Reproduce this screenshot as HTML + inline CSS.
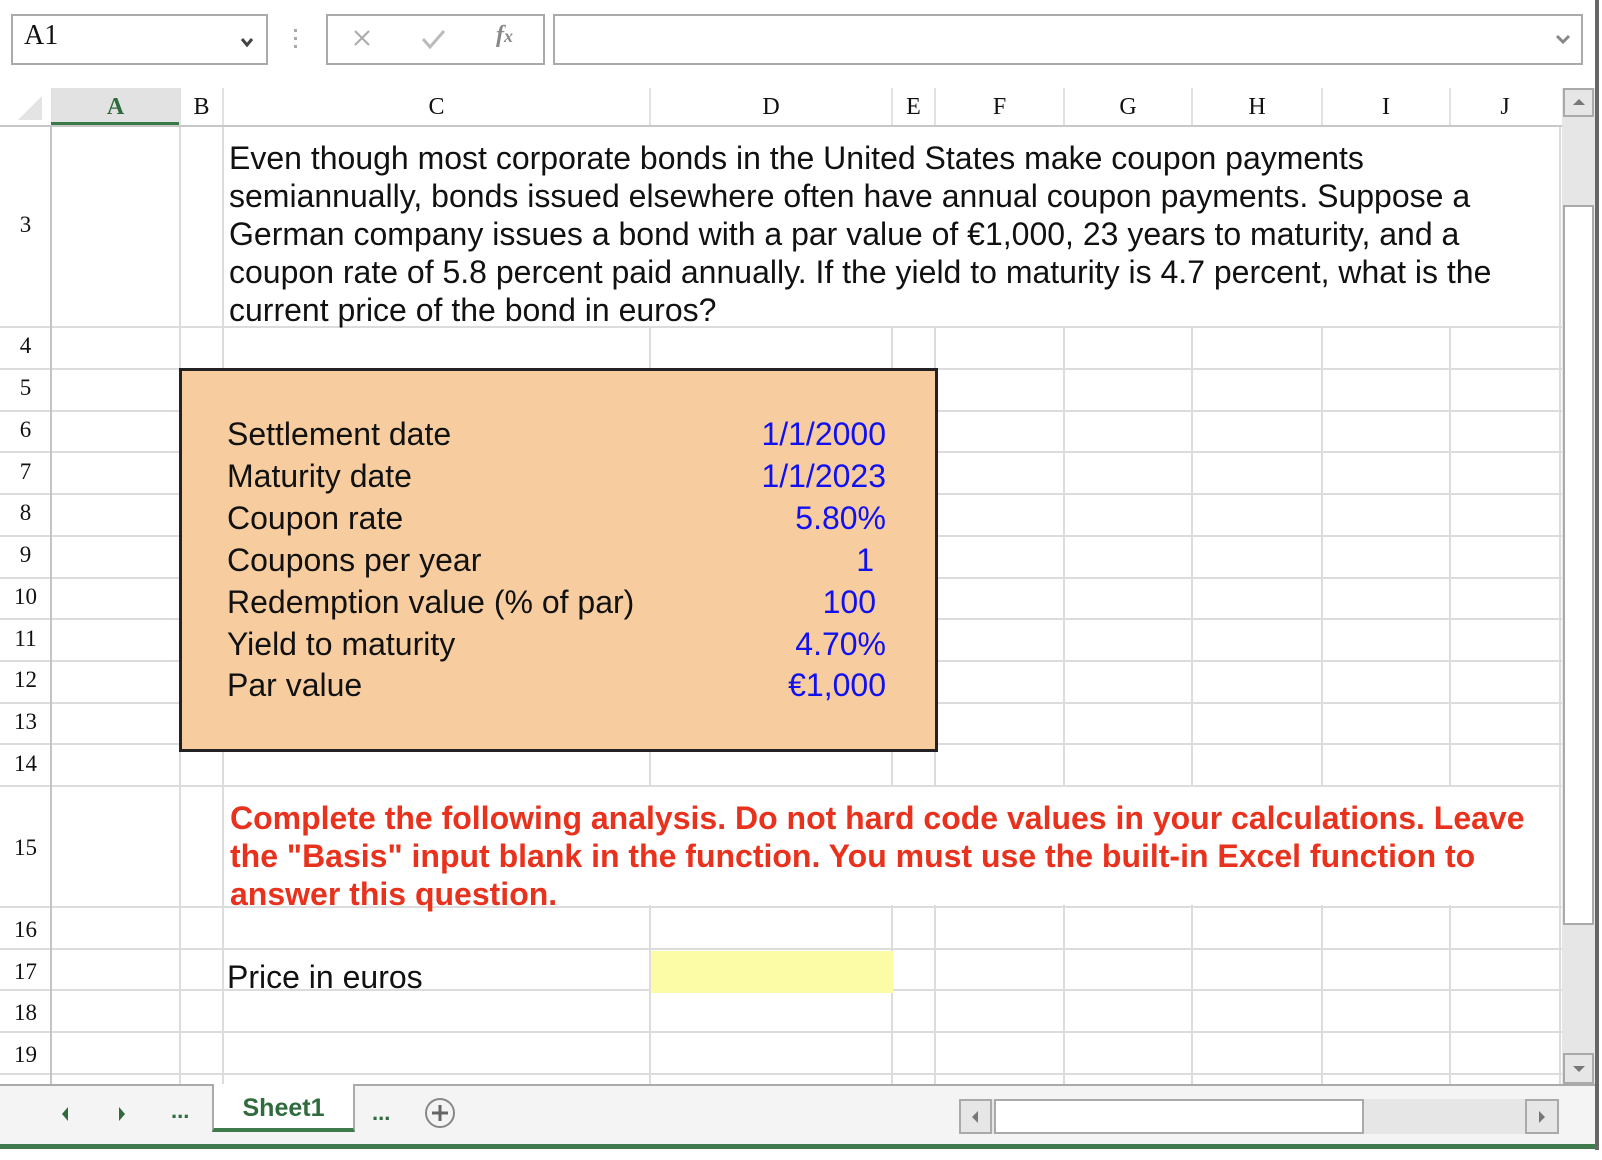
<!DOCTYPE html>
<html><head><meta charset="utf-8"><style>
*{margin:0;padding:0;box-sizing:border-box}
body{width:1602px;height:1160px;background:#fff;position:relative;overflow:hidden;font-family:"Liberation Sans",Arial,sans-serif}
.a{position:absolute}
.hl{position:absolute;height:2px;background:#dcdcdc;left:0;width:1562px}
.vl{position:absolute;width:2px;background:#dcdcdc;top:126px;height:960px}
.ser{font-family:"Liberation Serif",serif}
.rn{position:absolute;left:0;width:51px;text-align:center;font-family:"Liberation Serif",serif;font-size:23px;color:#111}
.ch{position:absolute;top:88px;height:38px;line-height:30px;text-align:center;font-family:"Liberation Serif",serif;font-size:24px;color:#111;padding-top:4px}
.t{position:absolute;font-size:32px;color:#111;white-space:nowrap;line-height:38px}
.v{position:absolute;font-size:32px;color:#1010f0;white-space:nowrap;text-align:right;line-height:38px}
.r{position:absolute;font-size:32px;font-weight:bold;color:#e8321e;white-space:nowrap;line-height:38px;left:230px}
</style></head><body>
<!-- formula bar -->
<div class="a" style="left:11px;top:14px;width:257px;height:51px;border:2px solid #aaa"></div>
<div class="a ser" style="left:24px;top:20px;font-size:28px;color:#111">A1</div>
<svg class="a" style="left:240px;top:36px" width="14" height="12"><path d="M2 3 L7 9 L12 3" stroke="#444" stroke-width="3" fill="none"/></svg>
<div class="a" style="left:294px;top:29px;width:3px;height:3px;background:#aaa;box-shadow:0 8px 0 #aaa,0 16px 0 #aaa"></div>
<div class="a" style="left:326px;top:14px;width:219px;height:51px;border:2px solid #aaa"></div>
<svg class="a" style="left:352px;top:28px" width="20" height="20"><path d="M3 3 L17 17 M17 3 L3 17" stroke="#aaa" stroke-width="2"/></svg>
<svg class="a" style="left:420px;top:28px" width="26" height="22"><path d="M3 11 L10 19 L24 3" stroke="#bbb" stroke-width="3" fill="none"/></svg>
<div class="a ser" style="left:496px;top:22px;font-size:24px;color:#888;font-style:italic;font-weight:bold">f<span style="font-size:18px">x</span></div>
<div class="a" style="left:553px;top:14px;width:1030px;height:51px;border:2px solid #aaa"></div>
<svg class="a" style="left:1555px;top:33px" width="16" height="12"><path d="M2 3 L8 9 L14 3" stroke="#888" stroke-width="3" fill="none"/></svg>
<div class="a" style="left:1595px;top:0;width:4px;height:1150px;background:#666"></div>

<!-- gridlines -->
<div class="vl" style="left:179px"></div>
<div class="vl" style="left:222px"></div>
<div class="vl" style="left:649px"></div>
<div class="vl" style="left:891px"></div>
<div class="vl" style="left:934px"></div>
<div class="vl" style="left:1063px"></div>
<div class="vl" style="left:1191px"></div>
<div class="vl" style="left:1321px"></div>
<div class="vl" style="left:1449px"></div>
<div class="vl" style="left:1559px"></div>
<div class="a" style="left:224px;top:127px;width:1334px;height:199px;background:#fff"></div>
<div class="a" style="left:224px;top:787px;width:1334px;height:118px;background:#fff"></div>
<div class="hl" style="top:326px"></div>
<div class="hl" style="top:368px"></div>
<div class="hl" style="top:410px"></div>
<div class="hl" style="top:451px"></div>
<div class="hl" style="top:493px"></div>
<div class="hl" style="top:535px"></div>
<div class="hl" style="top:577px"></div>
<div class="hl" style="top:618px"></div>
<div class="hl" style="top:660px"></div>
<div class="hl" style="top:702px"></div>
<div class="hl" style="top:743px"></div>
<div class="hl" style="top:785px"></div>
<div class="hl" style="top:906px"></div>
<div class="hl" style="top:948px"></div>
<div class="hl" style="top:989px"></div>
<div class="hl" style="top:1031px"></div>
<div class="hl" style="top:1073px"></div>
<div class="a" style="left:50px;top:86px;width:2px;height:1000px;background:#c4c4c4"></div>

<!-- column header -->
<div class="a" style="left:0;top:86px;width:1565px;height:40px;background:#fff"></div>
<svg class="a" style="left:14px;top:92px" width="30" height="30"><path d="M28 4 L28 28 L4 28 Z" fill="#e4e4e4"/></svg>
<div class="a" style="left:51px;top:88px;width:129px;height:38px;background:#e2e2e2;border-bottom:4px solid #3a7a4a"></div>
<div class="a" style="left:179px;top:88px;width:2px;height:38px;background:#e2e2e2"></div>
<div class="a" style="left:222px;top:88px;width:2px;height:38px;background:#e2e2e2"></div>
<div class="a" style="left:649px;top:88px;width:2px;height:38px;background:#e2e2e2"></div>
<div class="a" style="left:891px;top:88px;width:2px;height:38px;background:#e2e2e2"></div>
<div class="a" style="left:934px;top:88px;width:2px;height:38px;background:#e2e2e2"></div>
<div class="a" style="left:1063px;top:88px;width:2px;height:38px;background:#e2e2e2"></div>
<div class="a" style="left:1191px;top:88px;width:2px;height:38px;background:#e2e2e2"></div>
<div class="a" style="left:1321px;top:88px;width:2px;height:38px;background:#e2e2e2"></div>
<div class="a" style="left:1449px;top:88px;width:2px;height:38px;background:#e2e2e2"></div>
<div class="a" style="left:0;top:125px;width:1562px;height:2px;background:#c8c8c8"></div>
<div class="ch" style="left:51px;width:129px;color:#2f6b3d;font-weight:bold">A</div>
<div class="ch" style="left:180px;width:43px">B</div>
<div class="ch" style="left:223px;width:427px">C</div>
<div class="ch" style="left:650px;width:242px">D</div>
<div class="ch" style="left:892px;width:43px">E</div>
<div class="ch" style="left:935px;width:129px">F</div>
<div class="ch" style="left:1064px;width:128px">G</div>
<div class="ch" style="left:1192px;width:130px">H</div>
<div class="ch" style="left:1322px;width:128px">I</div>
<div class="ch" style="left:1450px;width:110px">J</div>

<!-- row 3 text -->
<div class="t" style="left:229px;top:139px">Even though most corporate bonds in the United States make coupon payments</div>
<div class="t" style="left:229px;top:177px">semiannually, bonds issued elsewhere often have annual coupon payments. Suppose a</div>
<div class="t" style="left:229px;top:215px">German company issues a bond with a par value of €1,000, 23 years to maturity, and a</div>
<div class="t" style="left:229px;top:253px">coupon rate of 5.8 percent paid annually. If the yield to maturity is 4.7 percent, what is the</div>
<div class="t" style="left:229px;top:291px">current price of the bond in euros?</div>

<!-- orange box -->
<div class="a" style="left:179px;top:368px;width:759px;height:384px;background:#f7cda0;border:3px solid #222"></div>
<div class="t" style="left:227px;top:415px">Settlement date</div>
<div class="t" style="left:227px;top:457px">Maturity date</div>
<div class="t" style="left:227px;top:499px">Coupon rate</div>
<div class="t" style="left:227px;top:541px">Coupons per year</div>
<div class="t" style="left:227px;top:583px">Redemption value (% of par)</div>
<div class="t" style="left:227px;top:625px">Yield to maturity</div>
<div class="t" style="left:227px;top:666px">Par value</div>
<div class="v" style="right:716px;top:415px">1/1/2000</div>
<div class="v" style="right:716px;top:457px">1/1/2023</div>
<div class="v" style="right:716px;top:499px">5.80%</div>
<div class="v" style="right:728px;top:541px">1</div>
<div class="v" style="right:726px;top:583px">100</div>
<div class="v" style="right:716px;top:625px">4.70%</div>
<div class="v" style="right:716px;top:666px">€1,000</div>

<!-- red -->
<div class="r" style="top:799px">Complete the following analysis. Do not hard code values in your calculations. Leave</div>
<div class="r" style="top:837px">the "Basis" input blank in the function. You must use the built-in Excel function to</div>
<div class="r" style="top:875px">answer this question.</div>

<div class="a" style="left:651px;top:951px;width:242px;height:42px;background:#fdfca6"></div>
<div class="t" style="left:227px;top:958px">Price in euros</div>

<!-- row numbers -->
<div class="rn" style="top:212px">3</div>
<div class="rn" style="top:333px">4</div>
<div class="rn" style="top:375px">5</div>
<div class="rn" style="top:417px">6</div>
<div class="rn" style="top:459px">7</div>
<div class="rn" style="top:500px">8</div>
<div class="rn" style="top:542px">9</div>
<div class="rn" style="top:584px">10</div>
<div class="rn" style="top:626px">11</div>
<div class="rn" style="top:667px">12</div>
<div class="rn" style="top:709px">13</div>
<div class="rn" style="top:751px">14</div>
<div class="rn" style="top:835px">15</div>
<div class="rn" style="top:917px">16</div>
<div class="rn" style="top:959px">17</div>
<div class="rn" style="top:1000px">18</div>
<div class="rn" style="top:1042px">19</div>

<!-- vertical scrollbar -->
<div class="a" style="left:1562px;top:88px;width:33px;height:1000px;background:#e6e6e6"></div>
<div class="a" style="left:1563px;top:88px;width:31px;height:29px;border:2px solid #aaa;background:#e6e6e6"></div>
<svg class="a" style="left:1571px;top:97px" width="16" height="10"><path d="M2 8 L8 2 L14 8 Z" fill="#777"/></svg>
<div class="a" style="left:1563px;top:205px;width:31px;height:720px;border:2px solid #aaa;background:#fff"></div>
<div class="a" style="left:1563px;top:1053px;width:31px;height:31px;border:2px solid #aaa;background:#e6e6e6"></div>
<svg class="a" style="left:1571px;top:1064px" width="16" height="10"><path d="M2 2 L8 8 L14 2 Z" fill="#777"/></svg>

<!-- tab bar -->
<div class="a" style="left:0;top:1084px;width:1595px;height:63px;background:#f4f4f4;border-top:2px solid #aaa"></div>
<div class="a" style="left:0;top:1144px;width:1595px;height:5px;background:#3e7a4c"></div>
<svg class="a" style="left:58px;top:1104px" width="80" height="20"><path d="M10 3 L4 10 L10 17 Z" fill="#2f6b3d"/><path d="M61 3 L67 10 L61 17 Z" fill="#2f6b3d"/></svg>
<div class="a" style="left:171px;top:1098px;font-size:22px;font-weight:bold;color:#2f6b3d">...</div>
<div class="a" style="left:212px;top:1084px;width:143px;height:48px;background:#fff;border:2px solid #aaa;border-top:none;border-bottom:4px solid #3e7a4c"></div>
<div class="a" style="left:212px;top:1094px;width:143px;text-align:center;font-size:25px;font-weight:bold;color:#2f6b3d">Sheet1</div>
<div class="a" style="left:372px;top:1100px;font-size:22px;font-weight:bold;color:#2f6b3d">...</div>
<svg class="a" style="left:424px;top:1097px" width="32" height="32"><circle cx="16" cy="16" r="14" fill="none" stroke="#888" stroke-width="2"/><path d="M16 8 V24 M8 16 H24" stroke="#666" stroke-width="3"/></svg>
<div class="a" style="left:959px;top:1099px;width:600px;height:35px;background:#e6e6e6"></div>
<div class="a" style="left:959px;top:1099px;width:33px;height:35px;border:2px solid #aaa;background:#e6e6e6"></div>
<svg class="a" style="left:969px;top:1109px" width="12" height="16"><path d="M9 2 L3 8 L9 14 Z" fill="#777"/></svg>
<div class="a" style="left:994px;top:1099px;width:370px;height:35px;border:2px solid #aaa;background:#fff"></div>
<div class="a" style="left:1525px;top:1099px;width:34px;height:35px;border:2px solid #aaa;background:#e6e6e6"></div>
<svg class="a" style="left:1536px;top:1109px" width="12" height="16"><path d="M3 2 L9 8 L3 14 Z" fill="#777"/></svg>
</body></html>
